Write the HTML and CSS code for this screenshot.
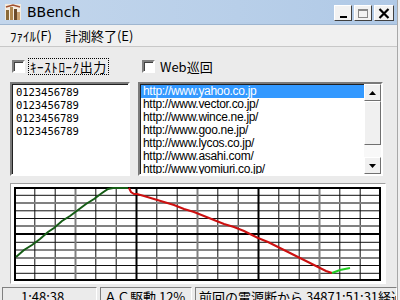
FILE: index.html
```html
<!DOCTYPE html>
<html>
<head>
<meta charset="utf-8">
<link rel="stylesheet" href="styles.css">
</head>
<body>
<div class="window">
  <div class="titlebar">
    <svg class="appicon" width="16" height="16" viewBox="0 0 16 16">
      <rect x="0" y="0" width="16" height="16" fill="#f4ece0"/>
      <rect x="1" y="6" width="3" height="10" fill="#8a6a3a"/>
      <rect x="5" y="3" width="3" height="13" fill="#b08850"/>
      <rect x="9" y="5" width="3" height="11" fill="#6a4a2a"/>
      <rect x="12" y="8" width="3" height="8" fill="#c8a070"/>
      <path d="M1 3 L8 1 L15 3" stroke="#a05030" stroke-width="1.5" fill="none"/>
    </svg>
    <span class="title">BBench</span>
    <div class="tbtns">
      <div class="tbtn"><span class="min"></span></div>
      <div class="tbtn"><span class="max"></span></div>
      <div class="tbtn close"><svg width="12" height="11" viewBox="0 0 12 11"><path d="M1.5 1 L10.5 10 M10.5 1 L1.5 10" stroke="#000" stroke-width="2.2"/></svg></div>
    </div>
  </div>
  <div class="menubar">
    <span class="menuitem">ﾌｧｲﾙ(F)</span>
    <span class="menuitem">計測終了(E)</span>
  </div>
  <div class="client">
    <div class="checkrow">
      <label class="check first"><span class="box"></span><span class="lbl focus">ｷｰｽﾄﾛｰｸ出力</span></label>
      <label class="check"><span class="box"></span><span class="lbl">Web巡回</span></label>
    </div>
    <div class="boxes">
      <div class="textbox">
        <div>0123456789</div>
        <div>0123456789</div>
        <div>0123456789</div>
        <div>0123456789</div>
      </div>
      <div class="listbox">
        <div class="items">
          <div class="item sel">http://www.yahoo.co.jp</div>
          <div class="item">http://www.vector.co.jp/</div>
          <div class="item">http://www.wince.ne.jp/</div>
          <div class="item">http://www.goo.ne.jp/</div>
          <div class="item">http://www.lycos.co.jp/</div>
          <div class="item">http://www.asahi.com/</div>
          <div class="item">http://www.yomiuri.co.jp/</div>
        </div>
        <div class="scrollbar">
          <div class="sbtn"><svg width="7" height="4" viewBox="0 0 7 4"><path d="M0 4 L3.5 0 L7 4 Z" fill="#000"/></svg></div>
          <div class="thumb"></div>
          <div class="track"></div>
          <div class="sbtn"><svg width="7" height="4" viewBox="0 0 7 4"><path d="M0 0 L3.5 4 L7 0 Z" fill="#000"/></svg></div>
        </div>
      </div>
    </div>
    <div class="graphpanel">
      <svg class="graph" width="367" height="94" viewBox="0 0 367 94">
        <rect x="0" y="0" width="367" height="94" fill="#fff"/>
        <g stroke="#111" stroke-width="1">
          <line x1="20.8" y1="0" x2="20.8" y2="94"/>
          <line x1="41.2" y1="0" x2="41.2" y2="94"/>
          <line x1="81.8" y1="0" x2="81.8" y2="94"/>
          <line x1="102.2" y1="0" x2="102.2" y2="94"/>
          <line x1="142.8" y1="0" x2="142.8" y2="94"/>
          <line x1="163.2" y1="0" x2="163.2" y2="94"/>
          <line x1="203.8" y1="0" x2="203.8" y2="94"/>
          <line x1="224.2" y1="0" x2="224.2" y2="94"/>
          <line x1="264.8" y1="0" x2="264.8" y2="94"/>
          <line x1="285.2" y1="0" x2="285.2" y2="94"/>
          <line x1="325.8" y1="0" x2="325.8" y2="94"/>
          <line x1="346.2" y1="0" x2="346.2" y2="94"/>
          <line x1="0" y1="8.3" x2="367" y2="8.3"/>
          <line x1="0" y1="23.8" x2="367" y2="23.8"/>
          <line x1="0" y1="31.5" x2="367" y2="31.5"/>
          <line x1="0" y1="55.3" x2="367" y2="55.3"/>
          <line x1="0" y1="63" x2="367" y2="63"/>
          <line x1="0" y1="78.5" x2="367" y2="78.5"/>
          <line x1="0" y1="86.3" x2="367" y2="86.3"/>
        </g>
        <g stroke="#808080" stroke-width="2">
          <line x1="61.5" y1="0" x2="61.5" y2="94"/>
          <line x1="183.5" y1="0" x2="183.5" y2="94"/>
          <line x1="305.5" y1="0" x2="305.5" y2="94"/>
          <line x1="0" y1="16" x2="367" y2="16"/>
          <line x1="0" y1="39" x2="367" y2="39"/>
          <line x1="0" y1="71" x2="367" y2="71"/>
        </g>
        <g stroke="#000" stroke-width="2">
          <line x1="122.5" y1="0" x2="122.5" y2="94"/>
          <line x1="244.5" y1="0" x2="244.5" y2="94"/>
          <line x1="0" y1="47" x2="367" y2="47"/>
        </g>
        <rect x="1" y="1" width="365" height="92" fill="none" stroke="#000" stroke-width="2"/>
        <polyline fill="none" stroke="#155c15" stroke-width="2" points="2,70 10,63 18,58 26,52 34,45 40,41 48,34 56,29 64,23 72,17 80,12 88,6 94,2 99,1 114,1"/>
        <polyline fill="none" stroke="#cc1010" stroke-width="2" points="115,1 117,5 120,7 123,7 130,9 140,12 150,15 160,18 170,22 180,25 190,29 200,33 210,37 220,40 230,44 244,51 254,55 264,60 274,65 284,70 294,75 304,80 312,84 318,86"/>
        <polyline fill="none" stroke="#22cc22" stroke-width="2" points="318,86 326,83 336,81"/>
      </svg>
    </div>
  </div>
  <div class="statusbar">
    <div class="panel p1">1:48:38</div>
    <div class="panel p2">ＡＣ駆動 12%</div>
    <div class="panel p3">前回の電源断から 34871:51:31経過</div>
  </div>
</div>
</body>
</html>
```
FILE: styles.css
```css
html, body {
  margin: 0;
  padding: 0;
  width: 400px;
  height: 300px;
  overflow: hidden;
  background: #f0f0f0;
}
body {
  font-family: "Noto Sans CJK JP", "Liberation Sans", sans-serif;
  font-size: 12px;
  color: #000;
}
.window {
  width: 397px;
  height: 300px;
  border-right: 1px solid #a8a8a8;
  background: #ebebeb;
  display: flex;
  flex-direction: column;
}
.titlebar {
  height: 25px;
  flex: none;
  display: flex;
  align-items: center;
  background: linear-gradient(90deg, #c3d6ec, #b8cfe9 60%, #b0c9e6);
  border-bottom: 1px solid #9fb6d0;
  box-sizing: border-box;
}
.appicon {
  margin-left: 5px;
}
.title {
  margin-left: 6px;
  font-family: "DejaVu Sans", sans-serif;
  font-size: 14px;
  color: #000;
}
.tbtns {
  margin-left: auto;
  margin-right: 3px;
  display: flex;
  gap: 2px;
  margin-top: 2px;
}
.tbtn {
  width: 18px;
  height: 16px;
  box-sizing: border-box;
  background: #f2f2f2;
  border: 1px solid;
  border-color: #fff #404040 #404040 #fff;
  display: flex;
  align-items: center;
  justify-content: center;
}
.tbtn.close {
  width: 20px;
}
.min {
  width: 7px;
  height: 2px;
  background: #000;
  margin-top: 8px;
}
.max {
  width: 10px;
  height: 9px;
  box-sizing: border-box;
  border: 1px solid #888;
  border-top-width: 2px;
}
.menubar {
  height: 21px;
  flex: none;
  display: flex;
  align-items: center;
  background: #f0f0f0;
  border-bottom: 1px solid #c8c8c8;
  padding-left: 10px;
  gap: 13px;
}
.menuitem {
  font-size: 13px;
  line-height: 16px;
}
.client {
  flex: none;
  padding-left: 10px;
  display: flex;
  flex-direction: column;
}
.checkrow {
  display: flex;
  margin-top: 12px;
  height: 15px;
  align-items: center;
}
.check {
  display: flex;
  align-items: center;
}
.check.first {
  width: 130px;
  margin-left: 2px;
}
.box {
  width: 13px;
  height: 13px;
  box-sizing: border-box;
  background: #fff;
  border: 2px solid;
  border-color: #808080 #fff #fff #808080;
  box-shadow: inset 1px 1px 0 #404040;
}
.lbl {
  margin-left: 4px;
  line-height: 15px;
  padding: 0 1px;
  font-size: 13px;
}
.lbl.focus {
  outline: 1px dotted #000;
  letter-spacing: 0.6px;
}
.boxes {
  display: flex;
  margin-top: 8px;
  height: 94px;
  gap: 8px;
}
.textbox {
  width: 120px;
  height: 94px;
  box-sizing: border-box;
  background: #fff;
  border: 2px solid;
  border-color: #7a7a7a #fff #fff #7a7a7a;
  box-shadow: inset 1px 1px 0 #202020;
  padding: 2px 0 0 4px;
  font-family: "DejaVu Sans Mono", monospace;
  font-size: 10.6px;
  line-height: 13px;
  overflow: hidden;
  letter-spacing: -0.1px;
}
.listbox {
  width: 245px;
  height: 94px;
  box-sizing: border-box;
  background: #fff;
  border: 2px solid;
  border-color: #7a7a7a #fff #fff #7a7a7a;
  box-shadow: inset 1px 1px 0 #202020;
  display: flex;
  overflow: hidden;
}
.items {
  flex: 1;
  padding-top: 1px;
  padding-left: 1px;
  overflow: hidden;
}
.item {
  height: 13px;
  line-height: 13px;
  font-family: "Liberation Sans", sans-serif;
  font-size: 12px;
  padding-left: 2px;
  white-space: nowrap;
  letter-spacing: -0.3px;
}
.item.sel {
  background: #3399ff;
  color: #fff;
}
.scrollbar {
  width: 17px;
  flex: none;
  display: flex;
  flex-direction: column;
  background: #f4f4f4;
}
.sbtn, .thumb {
  box-sizing: border-box;
  background: #f0f0f0;
  border: 1px solid;
  border-color: #fff #707070 #707070 #fff;
  display: flex;
  align-items: center;
  justify-content: center;
}
.sbtn {
  height: 17px;
}
.thumb {
  height: 44px;
}
.track {
  flex: 1;
  background: #f8f8f8;
}
.graphpanel {
  margin-top: 7px;
  width: 376px;
  height: 101px;
  box-sizing: border-box;
  background: #fff;
  border: 1px solid;
  border-color: #a0a0a0 #fff #fff #a0a0a0;
  padding: 3px 0 0 3px;
}
.graph {
  display: block;
}
.statusbar {
  margin-top: 3px;
  display: flex;
  gap: 3px;
  padding-left: 2px;
}
.panel {
  height: 18px;
  box-sizing: border-box;
  border: 1px solid;
  border-color: #808080 #fff #fff #808080;
  line-height: 17px;
  font-size: 13px;
  white-space: nowrap;
  overflow: hidden;
  font-family: "Noto Sans CJK JP", sans-serif;
}
.p1 {
  width: 95px;
  padding-left: 18px;
}
.p2 {
  width: 92px;
  padding-left: 3px;
}
.p3 {
  flex: 1;
  padding-left: 3px;
}
```
